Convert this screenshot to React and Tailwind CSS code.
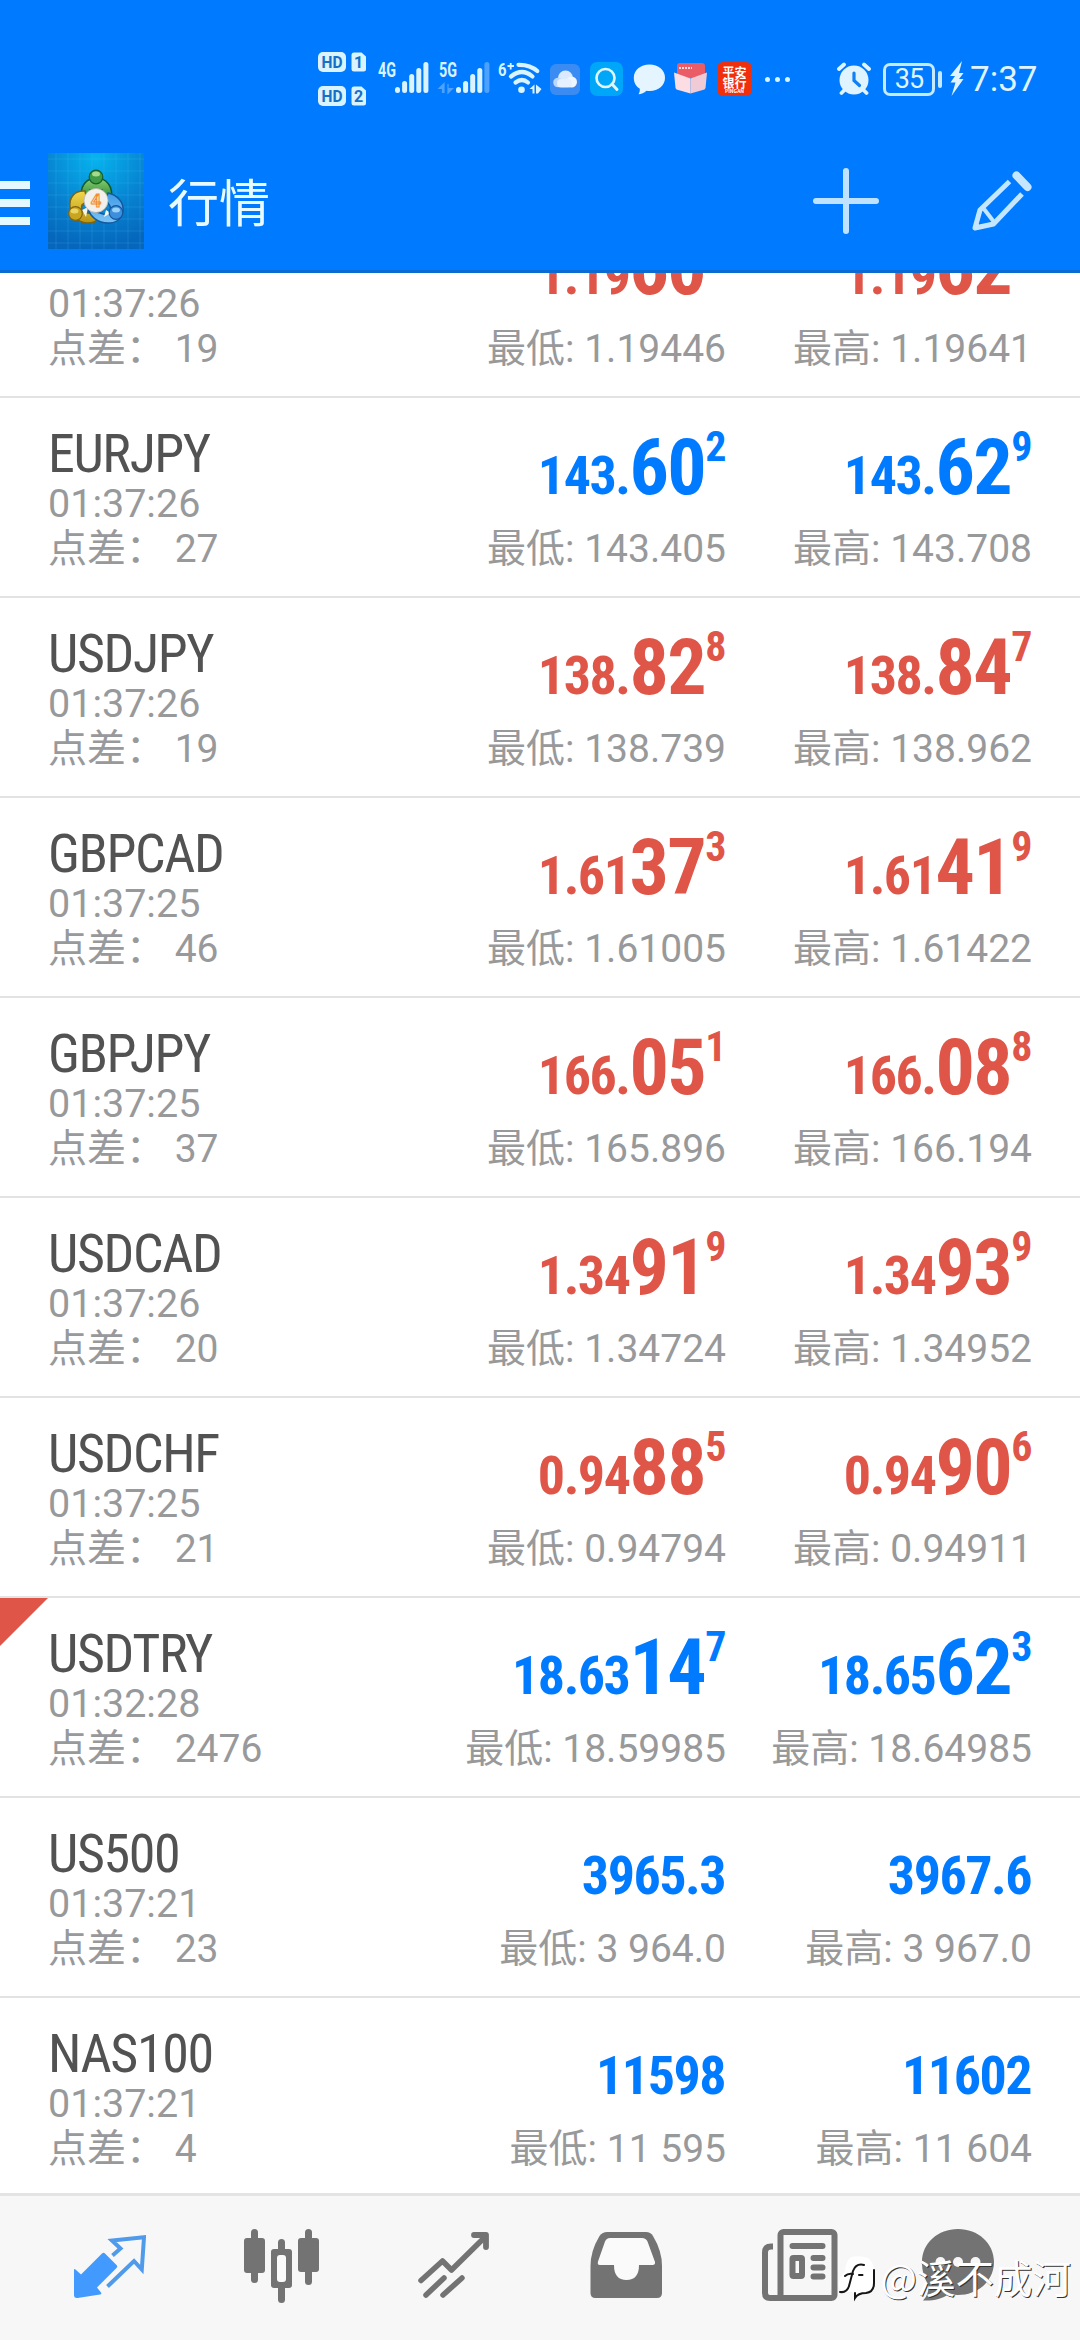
import React from "react";
import clsx from "clsx";

const QUOTES = [
  { symbol: "", time: "01:37:26", spread: "19", tone: "down", bid: ["1.19", "60", "0"], ask: ["1.19", "62", "0"], low: "1.19446", high: "1.19641" },
  { symbol: "EURJPY", time: "01:37:26", spread: "27", tone: "up", bid: ["143.", "60", "2"], ask: ["143.", "62", "9"], low: "143.405", high: "143.708" },
  { symbol: "USDJPY", time: "01:37:26", spread: "19", tone: "down", bid: ["138.", "82", "8"], ask: ["138.", "84", "7"], low: "138.739", high: "138.962" },
  { symbol: "GBPCAD", time: "01:37:25", spread: "46", tone: "down", bid: ["1.61", "37", "3"], ask: ["1.61", "41", "9"], low: "1.61005", high: "1.61422" },
  { symbol: "GBPJPY", time: "01:37:25", spread: "37", tone: "down", bid: ["166.", "05", "1"], ask: ["166.", "08", "8"], low: "165.896", high: "166.194" },
  { symbol: "USDCAD", time: "01:37:26", spread: "20", tone: "down", bid: ["1.34", "91", "9"], ask: ["1.34", "93", "9"], low: "1.34724", high: "1.34952" },
  { symbol: "USDCHF", time: "01:37:25", spread: "21", tone: "down", bid: ["0.94", "88", "5"], ask: ["0.94", "90", "6"], low: "0.94794", high: "0.94911" },
  { symbol: "USDTRY", time: "01:32:28", spread: "2476", tone: "up", flagged: true, bid: ["18.63", "14", "7"], ask: ["18.65", "62", "3"], low: "18.59985", high: "18.64985" },
  { symbol: "US500", time: "01:37:21", spread: "23", tone: "up", bid: ["3965.3"], ask: ["3967.6"], low: "3 964.0", high: "3 967.0" },
  { symbol: "NAS100", time: "01:37:21", spread: "4", tone: "up", bid: ["11598"], ask: ["11602"], low: "11 595", high: "11 604" },
];

const BARS = [6, 12, 19, 25, 31];

function HdBadge({ sim }) {
  return (
    <svg className="block h-[20px] w-[48px] overflow-visible" viewBox="0 0 48 20">
      <rect width="28" height="20" rx="5" fill="#d9f3ff" />
      <text x="14" y="16" textAnchor="middle" textLength="21" lengthAdjust="spacingAndGlyphs" fontSize="17" fontWeight="700" fontFamily="Roboto, sans-serif" fill="#1670c8">
        HD
      </text>
      <path d="M36 0.5h7.5l4.500 4v12.500a2.500 2.500 0 0 1-2.500 2.500h-9.500a2.500 2.500 0 0 1-2.500-2.500V3a2.500 2.500 0 0 1 2.500-2.500z" fill="#d9f3ff" />
      <text x="40.700" y="16" textAnchor="middle" fontSize="16" fontWeight="700" fontFamily="Roboto, sans-serif" fill="#1670c8">
        {sim}
      </text>
    </svg>
  );
}

function Signal({ label, faded }) {
  return (
    <svg className="block h-[34px] w-[52px] overflow-visible" viewBox="0 0 52 34">
      <text x="0" y="16" textLength="18" lengthAdjust="spacingAndGlyphs" fontSize="20" fontWeight="700" fontFamily="Roboto, sans-serif" fill="#d9f3ff">
        {label}
      </text>
      {faded && <path d="M0 27.500l5-5v9H3.500v-4zM9 23v9M9 32l4.500-4.500H9z" fill="#4da2ff" stroke="#4da2ff" strokeWidth="1.200" />}
      {BARS.map((h, i) => (
        <rect key={h} x={17 + i * 7.1} y={32 - h} width="5" height={h} rx="2.500" fill={faded && i === 4 ? "#4da2ff" : "#d9f3ff"} />
      ))}
    </svg>
  );
}

function Wifi() {
  return (
    <svg className="block h-[34px] w-[45px] overflow-visible" viewBox="0 0 45 34">
      <text x="0" y="15" fontSize="18" fontWeight="700" fontFamily="Roboto, sans-serif" fill="#d9f3ff" textLength="8.500" lengthAdjust="spacingAndGlyphs">
        6
      </text>
      <path d="M9.500 5h6.500M12.700 2v6.500" stroke="#d9f3ff" strokeWidth="1.800" />
      <g fill="none" stroke="#d9f3ff" strokeWidth="4.200" strokeLinecap="round">
        <path d="M20.500 3.800q11.500-.3 18.800 6.200" />
        <path d="M13 15.500q11-9 21.500 0" />
        <path d="M17.500 21.500q6.500-5 12.500 0" />
      </g>
      <circle cx="23.500" cy="28.800" r="3.300" fill="#d9f3ff" />
      <path d="M31.500 28l5-4.500v9h-2v-4.500zM38 23.500l5.500 4.500-3.500 4.500h-2z" fill="#d9f3ff" />
    </svg>
  );
}

function StatusBar() {
  return (
    <div className="flex h-[126px] items-start pl-[318px] pt-[52px]">
      <div className="flex flex-col gap-[14px]">
        <HdBadge sim="1" />
        <HdBadge sim="2" />
      </div>
      <div className="mt-[9px] ml-[12px] flex">
        <Signal label="4G" />
        <div className="ml-[9px]">
          <Signal label="5G" faded />
        </div>
        <div className="ml-[7px]">
          <Wifi />
        </div>
      </div>

      {/* notification icons */}
      <div className="mt-[10px] ml-[7px] flex h-[34px] items-center">
        <svg className="h-[31px] w-[30px]" viewBox="0 0 30 31">
          <rect width="30" height="31" rx="6" fill="#3b8cf2" />
          <circle cx="15.500" cy="14" r="7.500" fill="#dbeaff" />
          <circle cx="21.500" cy="18" r="5.500" fill="#eef6ff" />
          <circle cx="8" cy="18.500" r="4.800" fill="#b9d7ff" />
          <rect x="7" y="15" width="15" height="8.400" rx="4" fill="#e6f1ff" />
        </svg>
        <svg className="ml-[10px] h-[34px] w-[33px]" viewBox="0 0 33 34">
          <rect width="33" height="34" rx="7" fill="#00a6f8" />
          <circle cx="15.500" cy="16" r="9" fill="none" stroke="#e0f5ff" strokeWidth="2.700" />
          <path d="M22 22l5 5.500" stroke="#e0f5ff" strokeWidth="3" strokeLinecap="round" />
        </svg>
        <svg className="ml-[10px] h-[31px] w-[33px]" viewBox="0 0 33 31">
          <path d="M16.500 0.500C25.500.5 32 6 32 13.700S25.500 27 16.500 27c-1 0-2 0-3-.2C11 29 8.500 30 5.500 30.300c1-1.600 1.500-3.300 1.300-5.600C3 22.300.8 18.500.8 13.700.8 6 7.500.5 16.500.5z" fill="#e4f5ff" />
        </svg>
        <svg className="ml-[8px] h-[32px] w-[33px]" viewBox="0 0 33 32">
          <path d="M3 3a3 3 0 0 1 3-3h22a3 3 0 0 1 3 3v12H3z" fill="#ea5c66" />
          <path d="M5 5h13" stroke="#ffd9dc" strokeWidth="2" strokeDasharray="2 1" />
          <path d="M0 9.500l16.500 6v15L2.500 26.500 1.500 25z" fill="#fbdde3" />
          <path d="M33 9.500l-16.500 6v15l14-4 1-1.500z" fill="#f0cbd6" />
        </svg>
        <div className="ml-[10px] flex h-[34px] w-[35px] flex-col items-center justify-center rounded-[6px] bg-[#f0300c] font-['Noto_Sans_CJK_SC',sans-serif] text-[12px] leading-[11px] font-bold text-white">
          <span>平安</span>
          <span>银行</span>
          <span className="text-[5px] leading-[5px]">PINGAN</span>
        </div>
        <div className="ml-[13px] flex gap-[5px]">
          <span className="h-[5px] w-[5px] rounded-full bg-[#d9f3ff]" />
          <span className="h-[5px] w-[5px] rounded-full bg-[#d9f3ff]" />
          <span className="h-[5px] w-[5px] rounded-full bg-[#d9f3ff]" />
        </div>
      </div>

      <div className="mt-[9px] ml-[47px] flex h-[36px] items-center">
        <svg className="h-[34px] w-[34px]" viewBox="0 0 34 34">
          <circle cx="17" cy="18" r="14.500" fill="#dff4ff" />
          <path d="M2 7l5-4.500M32 7l-5-4.500M4.500 31l3-3M29.500 31l-3-3" stroke="#dff4ff" strokeWidth="3.800" strokeLinecap="round" />
          <path d="M17 11v7.500l5.500 5" fill="none" stroke="#1080f8" strokeWidth="3.200" strokeLinecap="round" />
        </svg>
        <div className="ml-[12px] flex h-[33px] w-[52px] items-center justify-center rounded-[7px] border-3 border-[#c5eaff] font-[Roboto,sans-serif] text-[27px] leading-none tracking-[-1px] text-[#dff4ff]">
          35
        </div>
        <span className="ml-[3px] h-[17px] w-[4px] rounded-[2px] bg-[#c5eaff]" />
        <svg className="ml-[8px] h-[36px] w-[14px]" viewBox="0 0 14 36">
          <path d="M12 0L0 15h5L0.500 21.500h5L1.500 35 13.500 18H9l4.500-6H9z" fill="#dff4ff" />
        </svg>
        <span className="ml-[6px] pt-px font-[Roboto,sans-serif] text-[35px] leading-[36px] text-[#dff4ff]">7:37</span>
      </div>
    </div>
  );
}

function AppLogo() {
  return (
    <svg className="h-[96px] w-[96px]" viewBox="0 0 96 96">
      <defs>
        <radialGradient id="logoBg" cx="50%" cy="5%" r="95%">
          <stop offset="0" stopColor="#06b4ee" />
          <stop offset="0.600" stopColor="#0780cf" />
          <stop offset="1" stopColor="#0566bb" />
        </radialGradient>
        <linearGradient id="green" x2="0" y2="1">
          <stop offset="0" stopColor="#8ed06e" />
          <stop offset="1" stopColor="#1f8438" />
        </linearGradient>
        <linearGradient id="gold" x2="0" y2="1">
          <stop offset="0" stopColor="#f2d84c" />
          <stop offset="1" stopColor="#b89413" />
        </linearGradient>
        <linearGradient id="sky" x2="0" y2="1">
          <stop offset="0" stopColor="#3f9be6" />
          <stop offset="1" stopColor="#7cc4f5" />
        </linearGradient>
      </defs>
      <rect width="96" height="96" fill="url(#logoBg)" />
      <path d="M8 0v96M20 0v96M32 0v96M44 0v96M56 0v96M68 0v96M80 0v96M92 0v96M0 6h96M0 18h96M0 30h96M0 42h96M0 54h96M0 66h96M0 78h96M0 90h96" stroke="#4fc3f5" strokeOpacity="0.200" />
      <path d="M34 46c-3-12 4-21 14-21s18 8 15 22l-6-1-3-9H42l-3 8z" fill="url(#green)" stroke="#0d5a2a" strokeWidth="1.500" />
      <path d="M37 38c-10-1-16 6-15 16 1 9 8 16 18 16 4 0 8-1 10-4l-7-6c-6 1-11-2-9-8l5-4z" fill="url(#gold)" stroke="#7d6410" strokeWidth="1.500" />
      <path d="M60 40c10 2 16 10 15 18-1 8-7 12-15 12-10 0-18-6-20-15l6 3 9 3c7 1 9-2 7-8l-4-6z" fill="url(#sky)" stroke="#1259a0" strokeWidth="1.500" />
      <path d="M34 57l6-3-2 10zM58 57l5 3-7 4z" fill="#f4f6ea" />
      <circle cx="48" cy="24" r="6.800" fill="#3f9b45" stroke="#155f2b" strokeWidth="1.200" />
      <ellipse cx="48" cy="21" rx="4" ry="2.500" fill="#a4da8c" />
      <circle cx="27.500" cy="60.500" r="6.800" fill="#c9a51e" stroke="#806510" strokeWidth="1.200" />
      <ellipse cx="26.500" cy="58" rx="4" ry="2.500" fill="#ecd568" />
      <circle cx="68" cy="59.500" r="6.800" fill="#3c8ede" stroke="#14569c" strokeWidth="1.200" />
      <ellipse cx="68" cy="57" rx="4" ry="2.500" fill="#9ad1fb" />
      <circle cx="48" cy="47.500" r="12" fill="#f3f0ec" stroke="#b9b3a9" strokeWidth="0.800" />
      <text x="48" y="54" textAnchor="middle" fontSize="18" fontWeight="700" fontFamily="Roboto, sans-serif" fill="#fbe3cc" stroke="#ee8c32" strokeWidth="1">
        4
      </text>
    </svg>
  );
}

function Header() {
  return (
    <header className="h-[273px] shrink-0 border-b-3 border-[#0a6cd2] bg-[#007aff]">
      <StatusBar />
      <div className="flex h-[150px] items-center">
        <div className="flex flex-col gap-[10px] pt-[4px]">
          <span className="h-[8px] w-[30px] bg-[#e4f8ff]" />
          <span className="h-[8px] w-[30px] bg-[#e4f8ff]" />
          <span className="h-[8px] w-[30px] bg-[#e4f8ff]" />
        </div>
        <div className="ml-[18px]">
          <AppLogo />
        </div>
        <h1 className="ml-[24px] pb-[2px] font-['Noto_Sans_CJK_SC',sans-serif] text-[51px] leading-[60px] text-[#e9faff]">行情</h1>
        <svg className="ml-auto h-[66px] w-[66px]" viewBox="0 0 66 66">
          <path d="M33 3v60M3 33h60" stroke="#bfe3ff" strokeWidth="6" strokeLinecap="round" />
        </svg>
        <svg className="mr-[48px] ml-[93px] h-[60px] w-[60px]" viewBox="0 0 60 60">
          <g fill="none" stroke="#c4e7ff" strokeWidth="5" strokeLinejoin="round">
            <path d="M37.500 10.500L8 39 3 57l18.500-4L50 23" />
            <path d="M12 38l10 13" strokeWidth="4" />
            <path d="M44.500 4.500L55.500 16" strokeWidth="8" strokeLinecap="round" />
          </g>
          <path d="M2 58l2-8 5 6z" fill="#c4e7ff" />
        </svg>
      </div>
    </header>
  );
}

function Price({ parts, tone, label, range }) {
  const [base, big, pip] = parts;
  return (
    <div className="flex w-[306px] flex-col pt-[31px]">
      <div
        className={clsx(
          "flex h-[78px] items-end justify-end font-['Roboto_Condensed',Roboto,sans-serif] leading-none font-bold [font-stretch:75%]",
          tone === "up" ? "text-[#007aff]" : "text-[#df5548]"
        )}
      >
        <span className={clsx("mb-[4px] text-[54px] tracking-[-1.5px]", !big && "mr-px")}>{base}</span>
        {big && <span className="text-[78px] tracking-[-1.5px]">{big}</span>}
        {pip && <span className="-mt-[3px] self-start text-[42px] tracking-[-0.5px]">{pip}</span>}
      </div>
      <p className="mt-[20px] text-right text-[39px] leading-[45px] whitespace-nowrap text-[#98999b]">
        {label}: {range}
      </p>
    </div>
  );
}

function QuoteRow({ quote }) {
  return (
    <li className="relative flex h-[200px] shrink-0 border-b-2 border-[#e3e3e3] pr-[48px] pl-[48px]">
      {quote.flagged && (
        <span className="absolute top-0 left-0 h-[48px] w-[48px] bg-[#df5548] [clip-path:polygon(0_0,100%_0,0_100%)]" />
      )}
      <div className="flex-1 pt-[29px] text-[#98999b]">
        <h2 className="h-[54px] font-['Roboto_Condensed',Roboto,sans-serif] text-[54px] leading-[54px] tracking-[-1.4px] text-[#525252] [font-stretch:75%]">
          {quote.symbol}
        </h2>
        <p className="text-[39.5px] leading-[45px]">{quote.time}</p>
        <p className="mt-px text-[39px] leading-[45px] whitespace-nowrap">点差： {quote.spread}</p>
      </div>
      <Price parts={quote.bid} tone={quote.tone} label="最低" range={quote.low} />
      <Price parts={quote.ask} tone={quote.tone} label="最高" range={quote.high} />
    </li>
  );
}

function TabBar() {
  return (
    <nav className="flex h-[147px] shrink-0 items-start border-t-3 border-[#e3e3e3] bg-[#f7f7f7] pt-[33px] pl-[74px]">
      <svg className="h-[74px] w-[72px]" viewBox="0 0 72 74">
        <path d="M1.500 40.500L7 45.500 28 24.500q1.500-1.500 3 0L42.500 36q1.500 1.500 0 3L23 58.500l4 5q1 1.700-1 2L3.500 69Q0 69.300 0 66V41q0-1.500 1.500-.5z" fill="#429aff" />
        <path d="M38.500 26.500l8-7-8.500-8L70 8.300 67.800 40.500 60 32 33.500 57.500" fill="none" stroke="#4f9aea" strokeWidth="4" />
      </svg>
      <svg className="ml-[98px] h-[74px] w-[75px]" viewBox="0 0 75 74" fill="#737373">
        <rect x="7" y="0" width="7" height="54" rx="3.500" />
        <rect x="0" y="9" width="21" height="35" rx="3" />
        <rect x="61" y="0" width="7" height="56" rx="3.500" />
        <rect x="54" y="9" width="21" height="34" rx="3" />
        <rect x="34" y="10" width="7" height="64" rx="3.500" />
        <rect x="27" y="20" width="21" height="39" rx="3" />
        <rect x="33" y="26" width="9" height="27" rx="3" fill="#fafafa" />
      </svg>
      <svg className="ml-[99px] h-[74px] w-[72px]" viewBox="0 0 72 74" fill="none" stroke="#737373" strokeWidth="5.500" strokeLinecap="round" strokeLinejoin="round">
        <path d="M3 51.500L24.500 32l9 9L66 9" />
        <path d="M56 6h12v12" strokeWidth="5.800" />
        <path d="M8 66l18-17M25 66l19-17" />
      </svg>
      <svg className="ml-[100px] h-[74px] w-[73px]" viewBox="0 0 73 74">
        <path d="M17 3h39q4.500 0 7 4 9 15 9 30v27q0 5-5 5H5.500q-5 0-5-5V37q0-15 9-30 3-4 7.500-4z" fill="#737373" />
        <path d="M20 9h32q4 0 5.500 3.500L65 33q.5 3-2.500 3H49q0 15-12.500 15T24 36H10q-3 0-2-3.500L15 12.500Q16.500 9 20 9z" fill="#fafafa" />
      </svg>
      <svg className="ml-[99px] h-[74px] w-[76px]" viewBox="0 0 76 74" fill="none" stroke="#737373">
        <rect x="18.500" y="3" width="54" height="66" rx="3" strokeWidth="6" />
        <path d="M11 17.500H9q-6 0-6 6V64q0 5 5 5h14" strokeWidth="6" />
        <path d="M30.500 17h30M51.500 29h9M51.500 38.500h9M51.500 47.500h9" strokeWidth="6" strokeLinecap="round" />
        <rect x="30.500" y="29" width="9.500" height="18" rx="1" strokeWidth="6" />
      </svg>
      <svg className="ml-[84px] h-[74px] w-[73px]" viewBox="0 0 73 74">
        <path d="M36 0C56 0 72 14 72 33S56 66 36 66c-3 0-6-.4-9-1-7 5-16 7-26 6.500C6 66 7 61 6 55 2 49 0 42 0 33 0 14 16 0 36 0z" fill="#737373" />
        <g fill="#f7f7f7">
          <circle cx="18.500" cy="33" r="5" />
          <circle cx="36" cy="33" r="5" />
          <circle cx="53.500" cy="33" r="5" />
        </g>
      </svg>
    </nav>
  );
}

function Watermark() {
  return (
    <div className="absolute right-[9px] bottom-[40px] flex items-center">
      <svg className="mt-[4px] h-[44px] w-[37px] overflow-visible" viewBox="0 0 37 44">
        <path d="M12 1Q20-1 29 2q6 4 6 13v12q0 8-8 9-6 1-10 6-1-4-4-6H4Q0 34 0 28q0-8 6-12 0-10 6-15z" fill="#fff" />
        <g fill="none" stroke="#151515" strokeWidth="2" strokeLinecap="round">
          <path d="M1 36q7 1 9-6l4-15q3-8 11-6" />
          <path d="M6 20q3-3 8-2M20 19h3.500" />
          <path d="M35 14v13q0 9-8 10-8 0-11 5v-5" />
        </g>
      </svg>
      <span className="ml-[5px] font-['Noto_Sans_CJK_SC',sans-serif] text-[38.500px] leading-[46px] text-white [text-shadow:1px_1px_0_#333]">@溪不成河</span>
    </div>
  );
}

export default function App() {
  return (
    <div className="relative flex h-[2340px] w-[1080px] flex-col overflow-hidden bg-white font-[Roboto,'Noto_Sans_CJK_SC',sans-serif]">
      <Header />
      <main className="min-h-0 flex-1 overflow-hidden">
        {/* list is scrolled, so the first row is partly under the header */}
        <ul className="-mt-[75px] flex flex-col">
          {QUOTES.map((quote) => (
            <QuoteRow key={quote.low} quote={quote} />
          ))}
        </ul>
      </main>
      <TabBar />
      <Watermark />
    </div>
  );
}
